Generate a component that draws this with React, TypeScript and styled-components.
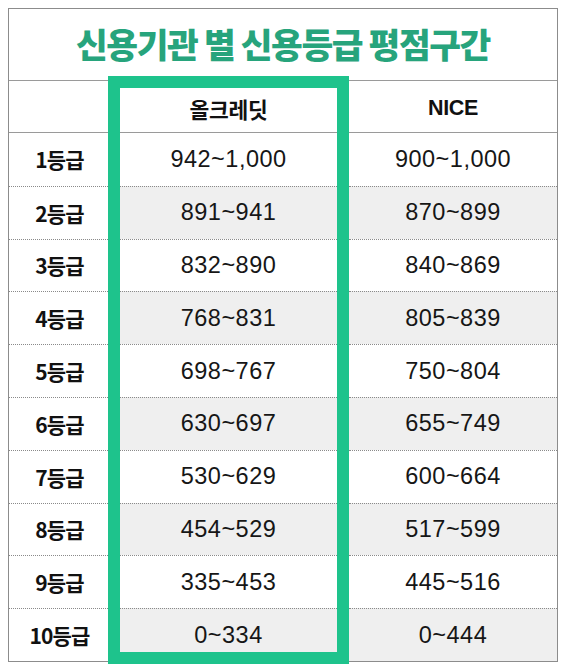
import styled, { createGlobalStyle } from 'styled-components'

const GlobalStyle = createGlobalStyle`
  *, *::before, *::after {
    box-sizing: border-box;
  }
  body {
    margin: 0;
    background: #ffffff;
    font-family: 'Liberation Sans', 'Noto Sans CJK KR', sans-serif;
    color: #111111;
  }
`

const Page = styled.div`
  padding: 8px 7px 6px 8px;
`

const Table = styled.div`
  position: relative;
  width: 550px;
  border: 1px solid #8c8c8c;
`

const Title = styled.div`
  height: 72px;
  display: flex;
  align-items: center;
  justify-content: center;
  border-bottom: 1px solid #9a9a9a;
  font-family: 'Noto Sans CJK KR', sans-serif;
  font-weight: 800;
  font-size: 34.5px;
  letter-spacing: -1.4px;
  color: #27a47c;
  padding-bottom: 3px;
`

const Grid = styled.div`
  display: grid;
  grid-template-columns: 99px 241px 1fr;
`

const Row = styled.div`
  display: contents;
`

const HeaderCell = styled.div`
  height: 52px;
  display: flex;
  align-items: center;
  justify-content: center;
  border-bottom: 1px solid #9a9a9a;
  font-family: 'Liberation Sans', 'Noto Sans CJK KR', sans-serif;
  font-weight: 700;
  font-size: 21.5px;
  letter-spacing: -0.3px;
  padding-top: 4px;
`

const LabelCell = styled.div<{ first?: boolean }>`
  height: 52.8px;
  display: flex;
  align-items: center;
  justify-content: center;
  border-top: ${({ first }) => (first ? 'none' : '1px dotted #8a8a8a')};
  font-family: 'Noto Sans CJK KR', sans-serif;
  font-weight: 700;
  font-size: 21px;
  letter-spacing: -0.8px;
  background: #ffffff;
  padding-left: 2px;
`

const ValueCell = styled.div<{ first?: boolean; shaded?: boolean }>`
  height: 52.8px;
  display: flex;
  align-items: center;
  justify-content: center;
  border-top: ${({ first }) => (first ? 'none' : '1px dotted #8a8a8a')};
  background: ${({ shaded }) => (shaded ? '#efefef' : '#ffffff')};
  font-size: 23.5px;
  letter-spacing: 0.5px;
  color: #161616;
`

const Highlight = styled.div`
  position: absolute;
  left: 99px;
  top: 67px;
  width: 241px;
  height: 588px;
  border: 12px solid #1ec38c;
  pointer-events: none;
`

const rows = [
  ['1등급', '942~1,000', '900~1,000'],
  ['2등급', '891~941', '870~899'],
  ['3등급', '832~890', '840~869'],
  ['4등급', '768~831', '805~839'],
  ['5등급', '698~767', '750~804'],
  ['6등급', '630~697', '655~749'],
  ['7등급', '530~629', '600~664'],
  ['8등급', '454~529', '517~599'],
  ['9등급', '335~453', '445~516'],
  ['10등급', '0~334', '0~444'],
]

const App = () => {
  return (
    <>
      <GlobalStyle />
      <Page>
        <Table>
          <Title>신용기관 별 신용등급 평점구간</Title>
          <Grid>
            <Row>
              <HeaderCell />
              <HeaderCell>올크레딧</HeaderCell>
              <HeaderCell>NICE</HeaderCell>
            </Row>
            {rows.map(([grade, allcredit, nice], i) => (
              <Row key={grade}>
                <LabelCell first={i === 0}>{grade}</LabelCell>
                <ValueCell first={i === 0} shaded={i % 2 === 1}>
                  {allcredit}
                </ValueCell>
                <ValueCell first={i === 0} shaded={i % 2 === 1}>
                  {nice}
                </ValueCell>
              </Row>
            ))}
          </Grid>
          <Highlight />
        </Table>
      </Page>
    </>
  )
}

export default App
